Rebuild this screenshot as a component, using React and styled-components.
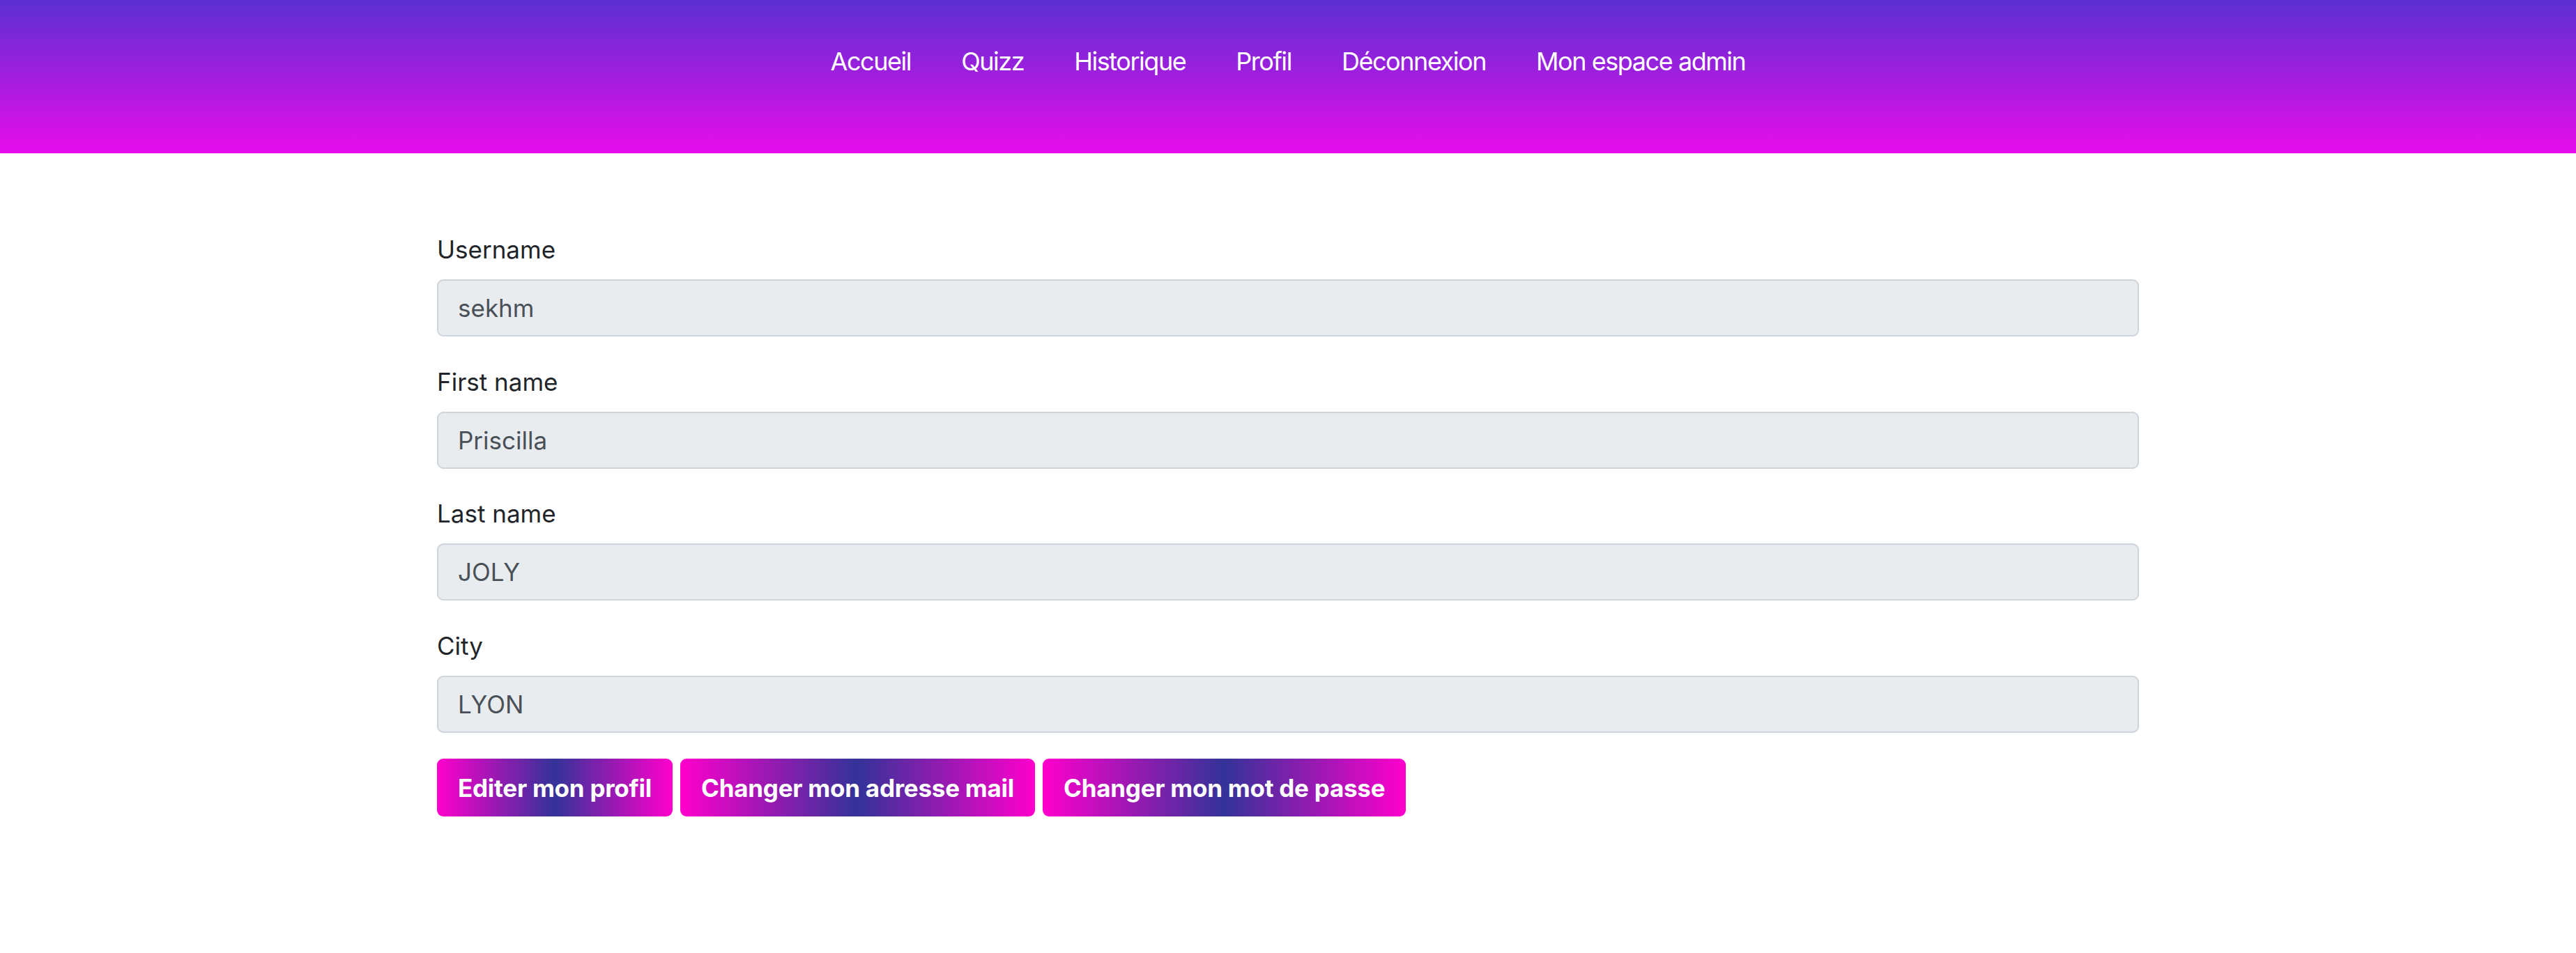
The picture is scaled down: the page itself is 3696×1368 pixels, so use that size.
import React from "react";
import styled, { createGlobalStyle } from "styled-components";

const Global = createGlobalStyle`
  html, body { margin: 0; padding: 0; background: #ffffff; }
  body { font-family: Inter, "Noto Sans", sans-serif; color: #212529; }
  * { box-sizing: border-box; }
`;

const Header = styled.header`
  height: 220px;
  background: linear-gradient(to bottom, #5b30d1 0%, #e80cec 100%);
  display: flex;
  justify-content: center;
  align-items: flex-start;
  padding-top: 61px;
`;

const Nav = styled.nav`
  display: flex;
`;

const NavLink = styled.a`
  color: #ffffff;
  font-size: 36px;
  line-height: 1.5;
  padding: 0 36px;
  text-decoration: none;
  letter-spacing: -1.45px;
`;

const Main = styled.main`
  width: 2442px;
  margin: 111px auto 0;
`;

const Field = styled.div`
  display: flex;
  flex-direction: column;
  margin-bottom: 37.5px;
`;

const Label = styled.label`
  font-size: 35px;
  line-height: 54px;
  margin-bottom: 16px;
  color: #212529;
`;

const Input = styled.input`
  height: 82px;
  padding: 0 28px;
  font-family: Inter, "Noto Sans", sans-serif;
  font-size: 35px;
  color: #495057;
  background: #e9ecef;
  border: 2px solid #ced4da;
  border-radius: 9px;
  outline: none;
`;

const Actions = styled.div`
  display: flex;
  gap: 11px;
  margin-top: 1px;
`;

const Button = styled.button`
  height: 83px;
  padding: 0 30px;
  border: none;
  border-radius: 9px;
  font-family: Inter, "Noto Sans", sans-serif;
  font-weight: 700;
  font-size: 35px;
  letter-spacing: -0.25px;
  color: #ffffff;
  background: linear-gradient(to right, #ff00cc 0%, #333399 50%, #ff00cc 100%);
  cursor: pointer;
`;

const fields = [
  ["Username", "sekhm"],
  ["First name", "Priscilla"],
  ["Last name", "JOLY"],
  ["City", "LYON"],
];

export default function App() {
  return (
    <>
      <Global />
      <Header>
        <Nav>
          {["Accueil", "Quizz", "Historique", "Profil", "Déconnexion", "Mon espace admin"].map((t) => (
            <NavLink key={t} href="#">{t}</NavLink>
          ))}
        </Nav>
      </Header>
      <Main>
        {fields.map(([label, value]) => (
          <Field key={label}>
            <Label>{label}</Label>
            <Input value={value} readOnly disabled />
          </Field>
        ))}
        <Actions>
          <Button>Editer mon profil</Button>
          <Button>Changer mon adresse mail</Button>
          <Button>Changer mon mot de passe</Button>
        </Actions>
      </Main>
    </>
  );
}
